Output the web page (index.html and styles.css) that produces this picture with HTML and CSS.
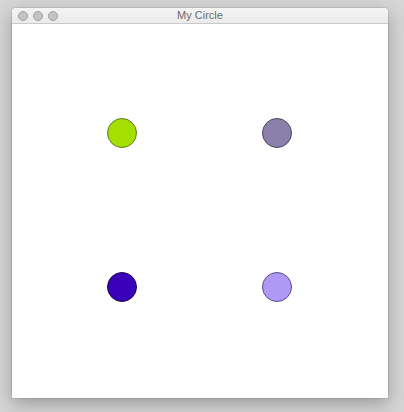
FILE: index.html
```html
<!DOCTYPE html>
<html>
<head>
<meta charset="utf-8">
<link rel="stylesheet" href="styles.css">
</head>
<body>
<div class="window">
  <div class="titlebar">
    <div class="lights">
      <span class="light"></span>
      <span class="light"></span>
      <span class="light"></span>
    </div>
    <div class="title">My Circle</div>
  </div>
  <div class="content">
    <div class="dot green"></div>
    <div class="dot grape"></div>
    <div class="dot indigo"></div>
    <div class="dot lilac"></div>
  </div>
</div>
</body>
</html>
```

FILE: styles.css
```css
html, body {
  margin: 0;
  padding: 0;
}
body {
  width: 404px;
  height: 412px;
  background: #d5d5d5;
  padding: 8px 0 0 12px;
  box-sizing: border-box;
  font-family: "Liberation Sans", Arial, sans-serif;
  overflow: hidden;
}
.window {
  width: 376px;
  height: 390px;
  background: #ffffff;
  border-radius: 4px 4px 0 0;
  box-shadow: 0 0 0 1px rgba(0,0,0,0.08), 0 6px 18px rgba(0,0,0,0.28);
  display: flex;
  flex-direction: column;
  overflow: hidden;
}
.titlebar {
  height: 15px;
  background: linear-gradient(#f4f4f4, #ebebeb);
  border-bottom: 1px solid #c9c9c9;
  display: flex;
  align-items: center;
  position: relative;
}
.lights {
  display: flex;
  gap: 5px;
  padding-left: 6px;
}
.light {
  width: 10px;
  height: 10px;
  border-radius: 50%;
  background: #c4c4c4;
  border: 1px solid #9e9e9e;
  box-sizing: border-box;
}
.title {
  position: absolute;
  left: 0;
  right: 0;
  text-align: center;
  font-size: 11px;
  color: #6b6b6b;
  line-height: 15px;
}
.content {
  flex: 1;
  display: grid;
  grid-template-columns: 30px 30px;
  grid-template-rows: 30px 30px;
  column-gap: 125px;
  row-gap: 124px;
  padding: 94px 0 0 95px;
}
.dot {
  width: 30px;
  height: 30px;
  border-radius: 50%;
  border: 1px solid #3d3d3d;
  box-sizing: border-box;
}
.green { background: #a3df00; border-color: #5f7a20; }
.grape { background: #8a80a9; border-color: #4a4560; }
.indigo { background: #3a00b9; border-color: #1e0a55; }
.lilac { background: #af98f6; border-color: #5c4f80; }
```
